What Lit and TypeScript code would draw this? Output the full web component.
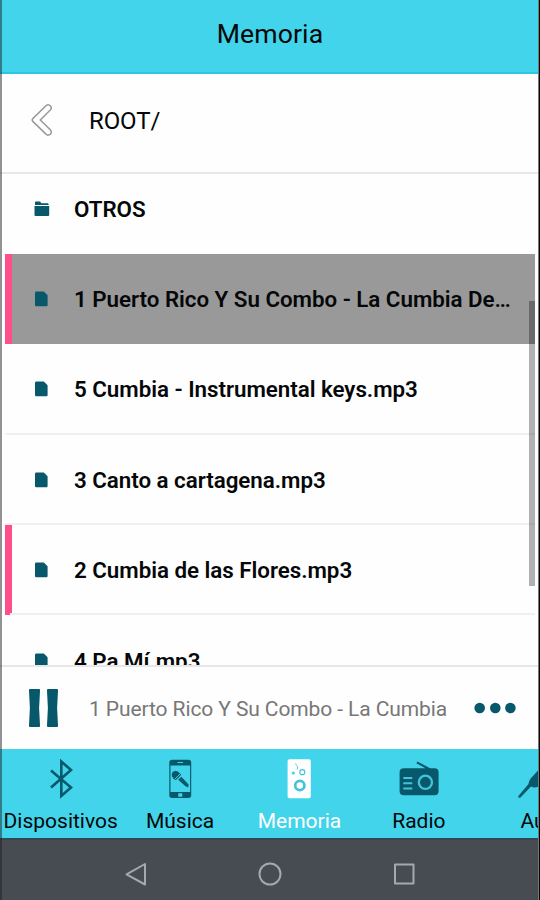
import { LitElement, html, css, svg } from "lit";
import { customElement } from "lit/decorators.js";
import { classMap } from "lit/directives/class-map.js";

interface Entry { name: string; folder?: boolean; selected?: boolean; marked?: boolean; }

const entries: Entry[] = [
  { name: "OTROS", folder: true },
  { name: "1 Puerto Rico Y Su Combo - La Cumbia Del Amor.mp3", selected: true, marked: true },
  { name: "5 Cumbia - Instrumental keys.mp3" },
  { name: "3 Canto a cartagena.mp3" },
  { name: "2 Cumbia de las Flores.mp3", marked: true },
  { name: "4 Pa Mí.mp3" },
];

const folderIcon = svg`<path d="M1 1.6Q1 .5 2 .5h4l1.4 1.7H13.6q1 0 1 1V4H1z"/><path d="M.5 5H15.2v9q0 1-1 1H1.5q-1 0-1-1z"/>`;
const fileIcon = svg`<path d="M2.200 .5H9.800L13.600 4.200V14q0 1.200-1.200 1.200H2.200Q1 15.200 1 14V1.700Q1 .5 2.200 .5z"/>`;

const tabs = [
  { label: "Dispositivos", icon: svg`<path class="line" d="M10 11.5 30 28.5 20.3 37V2.5L30 11 10 28.5"/>` },
  { label: "Música", icon: svg`<path fill-rule="evenodd" d="M12.200 .8H28.300Q31.200 .8 31.200 3.600V36.300Q31.200 39 28.300 39H12.200Q9.300 39 9.300 36.300V3.600Q9.300 .8 12.200 .8zM10.500 6.500V33H30.100V6.500z"/><path class="cut" d="M17.500 3h5.500v1.100h-5.500zM18.300 34.200h4v3.500h-4z"/><circle cx="15.600" cy="15.700" r="3.800"/><path d="M13 19.300 19 13.400 21.300 15.700 15.700 21.200zM18.200 20.700 21.300 17.700 28.600 25.500 28.200 28.400 25.500 27.300z"/><path class="cutline" d="M14.900 20 20.300 14.800"/>` },
  { label: "Memoria", active: true, icon: svg`<rect x="8.600" y=".3" width="23.200" height="39" rx="1.800"/><circle class="ring" cx="20.800" cy="26.500" r="4.600"/><circle class="ring thin" cx="23.300" cy="13.200" r="2.500"/><circle class="cut" cx="14.300" cy="14" r="1.600"/><path class="cutline" d="M16.600 4.500Q17 6.500 18.600 7.600 19.200 9 17.800 10.500"/>` },
  { label: "Radio", icon: svg`<path d="M17.300 4.300 18.400 2.400 31 9.200H35.500Q39.600 9.200 39.600 13V32Q39.600 36.200 35.500 36.200H4.800Q.6 36.200 .6 32V13.300Q.6 9.200 4.800 9.200H26.500z"/><path class="bars" d="M4.300 19h9M4.300 24.300h9M4.300 29.600h9"/><circle class="ring big" cx="26.400" cy="23.300" r="6.600"/>` },
  { label: "Aux", icon: svg`<path d="M.4 37 10.500 25Q11 20.500 15 17L24 7 33 16 23 26Q18 30 13 27.500L2.500 38.500Q0 39.700 .4 37z"/>` },
];

@customElement("app-root")
export class AppRoot extends LitElement {
  static styles = css`
    :host { display: block; width: 540px; height: 900px; font-family: Roboto, sans-serif; color: #050708; }
    * { box-sizing: border-box; }
    .screen { position: relative; display: flex; flex-direction: column; width: 540px; height: 900px; overflow: hidden; background: #fefefe; }
    .edge-left, .edge-right { position: absolute; top: 0; bottom: 0; left: 0; width: 2px; background: rgba(30, 30, 34, .48); }
    .edge-right { left: auto; right: 0; width: 2px; background: linear-gradient(90deg, #777 0 .6px, #080808 .6px); }
    header { flex: none; height: 74px; padding-top: 18px; text-align: center; font-size: 26.600px; line-height: 31px; letter-spacing: .1px; background: #41d4ea; border-bottom: 2px solid #2ec5e0; }
    .path { flex: none; height: 100px; display: flex; align-items: flex-start; padding: 29px 0 0 30px; border-bottom: 2px solid #e7e7e7; }
    .path svg { width: 24px; height: 34px; margin-right: 35px; fill: none; stroke: #999; stroke-width: 1.5; }
    .path span { font-size: 24px; line-height: 35px; padding-top: 1px; letter-spacing: -.1px; }
    .list { position: relative; flex: none; height: 491px; padding: 0 5px; overflow: hidden; }
    .rows { margin-top: -10.5px; }
    .row { height: 90.4px; display: flex; align-items: center; padding-left: 29px; border-bottom: 2px solid #f0f0f0; }
    .row.folder { border-bottom-color: #fefefe; }
    .row.marked { background-image: linear-gradient(#ff4f8b, #ff4f8b); background-size: 7px 100%; background-repeat: no-repeat; background-origin: border-box; border-image: linear-gradient(90deg, #ff4f8b 0 7px, #f0f0f0 7px) 2; border-image-width: 0 0 2px 0; }
    .row.selected { background-color: #999; }
    .row.selected.marked { border-bottom: 0; border-image: none; padding-bottom: 2px; }
    .row svg { flex: none; width: 16px; height: 16px; margin: 2px 24px 0 0; fill: #07586a; }
    .row span { width: 442px; padding-top: 2px; white-space: nowrap; overflow: hidden; text-overflow: ellipsis; font-size: 22.350px; letter-spacing: -.03px; line-height: 30px; font-weight: 600; }
    .thumb { position: absolute; right: 5px; top: 127px; width: 6px; height: 285px; background: rgba(0, 0, 0, .3); }
    .player { flex: none; height: 84px; display: flex; align-items: center; padding: 0 24px 0 28px; border-top: 2px solid #e7e7e7; }
    .player .pause { width: 31px; height: 38px; margin-right: 30px; fill: #07586a; }
    .player span { width: 385px; font-size: 21px; letter-spacing: -.1px; color: #777; white-space: nowrap; padding-top: 2px; }
    .player .dots { width: 42px; height: 12px; fill: #07586a; }
    .tabs { flex: none; height: 89px; display: flex; padding-left: 1px; background: #41d4ea; overflow: hidden; }
    .tab { flex: 0 0 119.4px; display: flex; flex-direction: column; align-items: center; padding-top: 10px; fill: #07586a; }
    .tab svg { width: 40px; height: 40px; }
    .tab span { margin-top: 9px; font-size: 21px; line-height: 26px; white-space: nowrap; }
    .tab.active { color: #fff; fill: #fff; }
    .line { fill: none; stroke: #07586a; stroke-width: 2.600; }
    .cut { fill: #41d4ea; }
    .cutline { fill: none; stroke: #41d4ea; stroke-width: 1; }
    .ring { fill: none; stroke: #41c4da; stroke-width: 2.700; }
    .ring.thin { stroke-width: 1.200; }
    .ring.big { stroke: #41c4da; stroke-width: 2.300; }
    .bars { stroke: #41c4da; stroke-width: 2; }
    .nav { flex: none; height: 62px; display: flex; justify-content: space-between; align-items: center; padding: 11px 124px 0 124px; background: #464c52; border-top: 2px solid #35474e; }
    .nav svg { width: 24px; height: 26px; fill: none; stroke: #a6a9ab; stroke-width: 2; stroke-linejoin: round; margin-bottom: 3px; }
  `;

  render() {
    return html`<div class="screen">
      <header>Memoria</header>
      <div class="path">
        <svg viewBox="0 0 24 34"><path d="M16.200 2.500 2.800 15.600Q1.600 17 2.800 18.400L16.200 31.300Q18.600 33 20.600 31Q22.200 29 20.300 26.700L10.300 17 20.300 7Q22.200 5 20.500 3Q18.500 .800 16.200 2.500z"/></svg>
        <span>ROOT/</span>
      </div>
      <div class="list">
        <div class="rows">
          ${entries.map(e => html`<div class=${classMap({ row: true, folder: !!e.folder, selected: !!e.selected, marked: !!e.marked })}>
            <svg viewBox="0 0 16 16">${e.folder ? folderIcon : fileIcon}</svg><span>${e.name}</span>
          </div>`)}
        </div>
        <div class="thumb"></div>
      </div>
      <div class="player">
        <svg class="pause" viewBox="0 0 31 38"><path d="M2 0H11Q12.500 0 12 2Q10.200 19 12 36Q12.500 38 11 38H2Q.5 38 1 36Q2.800 19 1 2Q.5 0 2 0z"/><path d="M20 0H29Q30.500 0 30 2Q28.200 19 30 36Q30.500 38 29 38H20Q18.500 38 19 36Q20.800 19 19 2Q18.500 0 20 0z"/></svg>
        <span>1 Puerto Rico Y Su Combo - La Cumbia</span>
        <svg class="dots" viewBox="0 0 42 12"><circle cx="5.700" cy="6" r="5.300"/><circle cx="21.300" cy="6" r="5.300"/><circle cx="36.400" cy="6" r="5.300"/></svg>
      </div>
      <div class="tabs">
        ${tabs.map(t => html`<div class=${classMap({ tab: true, active: !!t.active })}><svg viewBox="0 0 40 40">${t.icon}</svg><span>${t.label}</span></div>`)}
      </div>
      <div class="nav">
        <svg viewBox="0 0 24 26"><path d="M21 3V23.500L2.500 13.300z"/></svg>
        <svg viewBox="0 0 24 26"><circle cx="12" cy="13" r="10.500"/></svg>
        <svg viewBox="0 0 24 26"><path d="M3 3.500H21.500V22.500H3z"/></svg>
      </div>
      <div class="edge-left"></div><div class="edge-right"></div>
    </div>`;
  }
}
